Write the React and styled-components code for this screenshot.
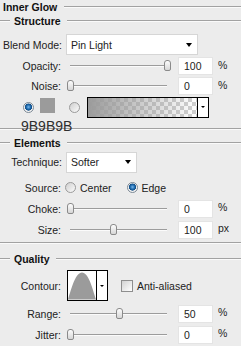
import React from "react";
import styled, { createGlobalStyle } from "styled-components";

const GlobalStyle = createGlobalStyle`
  html, body {
    margin: 0;
    padding: 0;
    background: #ececec;
  }
  body {
    font-family: "Liberation Sans", Arial, sans-serif;
  }
`;

const Panel = styled.div`
  width: 241px;
  height: 346px;
  background: #ececec;
  color: #222;
  font-size: 10.5px;
  overflow: hidden;
  display: flex;
  flex-direction: column;
`;

const TitleRow = styled.div`
  height: 13px;
  flex: none;
  display: flex;
  align-items: center;
  gap: 7px;
  padding-left: 3px;
  font-weight: bold;
  color: #111;

  &::after {
    content: "";
    flex: 1;
    border-top: 1px solid #a2a2a2;
    border-bottom: 1px solid #fafafa;
  }
`;

const SectionHeader = styled.div`
  height: 16px;
  flex: none;
  margin-top: ${(p) => p.$top || 0}px;
  display: flex;
  align-items: center;
  font-weight: bold;
  color: #111;

  &::before {
    content: "";
    width: 10px;
    margin-right: 4px;
    border-top: 1px solid #a2a2a2;
    border-bottom: 1px solid #fafafa;
  }
  &::after {
    content: "";
    flex: 1;
    margin-left: 6px;
    border-top: 1px solid #a2a2a2;
    border-bottom: 1px solid #fafafa;
  }
`;

const Divider = styled.div`
  flex: none;
  margin-top: ${(p) => p.$top || 0}px;
  border-top: 1px solid #a2a2a2;
  border-bottom: 1px solid #fafafa;
`;

const Row = styled.div`
  flex: none;
  height: ${(p) => p.$h || 21}px;
  margin-top: ${(p) => p.$top || 0}px;
  display: flex;
  align-items: center;
`;

const Label = styled.span`
  width: ${(p) => p.$w || 61}px;
  flex: none;
  text-align: right;
  white-space: nowrap;
`;

const Select = styled.div`
  width: ${(p) => p.$w}px;
  height: 21px;
  margin-left: 4px;
  box-sizing: border-box;
  background: #fff;
  border: 1px solid #d6d6d6;
  display: flex;
  align-items: center;
  justify-content: space-between;
  padding: 0 5px 0 4px;
`;

const Caret = styled.span`
  width: 0;
  height: 0;
  border-left: ${(p) => p.$s || 3.5}px solid transparent;
  border-right: ${(p) => p.$s || 3.5}px solid transparent;
  border-top: ${(p) => (p.$s ? p.$s - 0.5 : 4)}px solid #000;
`;

const Track = styled.div`
  position: relative;
  width: 104px;
  height: 12px;
  margin-left: 5px;
  flex: none;

  &::before {
    content: "";
    position: absolute;
    left: 4px;
    right: 3px;
    top: 5px;
    border-top: 1px solid #9c9c9c;
    border-bottom: 1px solid #fbfbfb;
  }
`;

const Thumb = styled.div`
  position: absolute;
  top: 0;
  width: 7px;
  height: 11px;
  box-sizing: border-box;
  border: 1px solid #8a8a8a;
  border-radius: 3px 3px 2px 2px;
  background: linear-gradient(#fdfdfd, #d6d6d6);
`;

const NumBox = styled.div`
  width: 35px;
  height: 18px;
  margin-left: 8px;
  box-sizing: border-box;
  background: #fff;
  border: 1px solid #e4e4e4;
  padding-left: 5px;
  display: flex;
  align-items: center;
  flex: none;
`;

const Unit = styled.span`
  margin-left: 5px;
  margin-top: -3px;
`;

const Radio = styled.span`
  width: 11px;
  height: 11px;
  flex: none;
  box-sizing: border-box;
  border-radius: 50%;
  border: 1px solid ${(p) => (p.$checked ? "#7d8a96" : "#9a9a9a")};
  background: ${(p) =>
    p.$checked
      ? "radial-gradient(circle at 50% 45%, #79b8ea 0, #2470b4 2px, #0e4c86 3.3px, #f2f2f2 3.8px)"
      : "linear-gradient(135deg, #cfcfcf, #fbfbfb)"};
`;

const Option = styled.span`
  display: flex;
  align-items: center;
  gap: 4px;
  margin-left: ${(p) => p.$left || 0}px;
`;

const ColorRow = styled(Row)`
  padding-left: 23px;
`;

const Swatch = styled.span`
  width: 15px;
  height: 15px;
  margin-left: 6px;
  margin-bottom: 3px;
  background: #9b9b9b;
  flex: none;
`;

const GradientBox = styled.div`
  width: 122px;
  height: 21px;
  margin-left: 7px;
  box-sizing: border-box;
  border: 1px solid #000;
  display: flex;
`;

const GradientFill = styled.div`
  flex: 1;
  background:
    linear-gradient(to right, #9b9b9b, rgba(155, 155, 155, 0)),
    repeating-conic-gradient(#cfcfcf 0 25%, #ffffff 0 50%) 0 0 / 8px 8px;
`;

const DropPart = styled.div`
  width: 10px;
  flex: none;
  background: #fff;
  border-left: 1px solid #000;
  display: flex;
  align-items: center;
  justify-content: center;
`;

const HexLabel = styled.div`
  position: relative;
  z-index: 1;
  flex: none;
  height: 9px;
  padding-top: 1px;
  padding-left: 21px;
  font-size: 14px;
  line-height: 14px;
  color: #2e2e2e;
`;

const ContourBox = styled.div`
  width: 41px;
  height: 31px;
  margin-left: 6px;
  box-sizing: border-box;
  border: 1px solid #000;
  display: flex;
  background: #fff;
`;

const Checkbox = styled.span`
  width: 12px;
  height: 12px;
  margin-left: 13px;
  margin-right: 4px;
  box-sizing: border-box;
  border: 1px solid #8e8e8e;
  background: linear-gradient(135deg, #d2d2d2, #ffffff);
  flex: none;
`;

const SliderRow = ({ label, value, pct, unit = "%", h, top }) => (
  <Row $h={h} $top={top}>
    <Label>{label}</Label>
    <Track>
      <Thumb style={{ left: 1 + pct * 97 }} />
    </Track>
    <NumBox>{value}</NumBox>
    <Unit>{unit}</Unit>
  </Row>
);

const ContourCurve = () => (
  <svg width="29" height="29" viewBox="0 0 29 29">
    <path d="M0 29 C4 16 8 1 14.5 1 C21 1 25 16 29 29 Z" fill="#9b9b9b" />
  </svg>
);

export default function App() {
  return (
    <>
      <GlobalStyle />
      <Panel>
        <TitleRow>Inner Glow</TitleRow>
        <SectionHeader>Structure</SectionHeader>

        <Row $h={23} $top={4}>
          <Label $w={62}>Blend Mode:</Label>
          <Select $w={132}>
            <span>Pin Light</span>
            <Caret />
          </Select>
        </Row>
        <SliderRow label="Opacity:" value="100" pct={1} h={20} />
        <SliderRow label="Noise:" value="0" pct={0} h={20} />

        <ColorRow $h={22}>
          <Radio $checked />
          <Swatch />
          <Radio style={{ marginLeft: 14 }} />
          <GradientBox>
            <GradientFill />
            <DropPart>
              <Caret $s={2.5} />
            </DropPart>
          </GradientBox>
        </ColorRow>
        <HexLabel>9B9B9B</HexLabel>
        <Divider />

        <SectionHeader $top={5}>Elements</SectionHeader>
        <Row $h={22}>
          <Label $w={62}>Technique:</Label>
          <Select $w={71}>
            <span>Softer</span>
            <Caret />
          </Select>
        </Row>
        <Row $h={21} $top={4}>
          <Label>Source:</Label>
          <Option $left={4}>
            <Radio />
            Center
          </Option>
          <Option $left={15}>
            <Radio $checked />
            Edge
          </Option>
        </Row>
        <SliderRow label="Choke:" value="0" pct={0} />
        <SliderRow label="Size:" value="100" pct={0.44} unit="px" />
        <Divider $top={2} />

        <SectionHeader $top={7}>Quality</SectionHeader>
        <Row $h={33} $top={2}>
          <Label>Contour:</Label>
          <ContourBox>
            <ContourCurve />
            <DropPart>
              <Caret $s={2.5} />
            </DropPart>
          </ContourBox>
          <Checkbox />
          <span>Anti-aliased</span>
        </Row>
        <SliderRow label="Range:" value="50" pct={0.5} top={1} />
        <SliderRow label="Jitter:" value="0" pct={0} />
      </Panel>
    </>
  );
}
